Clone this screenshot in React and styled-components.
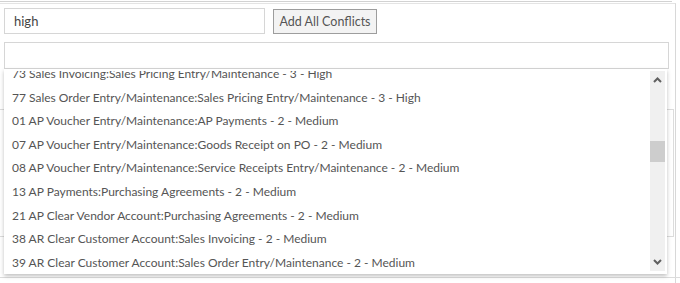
import React from 'react';
import styled, { createGlobalStyle } from 'styled-components';

const GlobalStyle = createGlobalStyle`
  body {
    margin: 0;
    background: #fff;
    font-family: Lato, "Open Sans", Arial, sans-serif;
  }
`;

const TopRule = styled.div`
  margin-top: 1px;
  height: 1px;
  width: 672px;
  background: #d2d2d2;
`;

const Panel = styled.div`
  margin-top: 1px;
  width: 671px;
  height: 279px;
  border-top: 1px solid #e4e4e4;
  border-right: 1px solid #d8d8d8;
  padding: 4px 0 0 4px;
  box-sizing: content-box;
`;

const SearchRow = styled.div`
  display: flex;
  align-items: flex-start;
  gap: 8px;
`;

const TextInput = styled.input`
  box-sizing: border-box;
  width: ${p => p.$width}px;
  height: ${p => p.$height}px;
  border: 1px solid #d6d6d6;
  padding: 0 9px;
  font-family: inherit;
  font-size: 13px;
  color: #444;
  outline: none;
  background: #fff;
`;

const Button = styled.button`
  box-sizing: border-box;
  margin-top: 1px;
  width: 104px;
  height: 25px;
  border: 1px solid #9d9d9d;
  background: #f3f3f3;
  color: #555;
  font-family: inherit;
  font-size: 12.5px;
  padding: 0;
`;

const Combo = styled.div`
  position: relative;
  margin-top: 8px;
  width: 665px;
`;

const Dropdown = styled.div`
  position: absolute;
  top: 27px;
  left: 0;
  width: 663px;
  height: 205px;
  box-sizing: border-box;
  background: #fff;
  box-shadow: 0 2px 4px rgba(0, 0, 0, 0.25);
  display: flex;
  padding: 2px 2px 3px 0;
  z-index: 2;
`;

const List = styled.ul`
  flex: 1;
  margin: 0;
  padding: 0;
  list-style: none;
  overflow: hidden;
`;

const Item = styled.li`
  height: 23.6px;
  line-height: 23.6px;
  padding-left: 8px;
  font-size: 12px;
  color: #555;
  white-space: nowrap;
  &:first-child {
    margin-top: ${p => p.$offset || 0}px;
  }
`;

const Scrollbar = styled.div`
  width: 15px;
  background: #f0f0f0;
  display: flex;
  flex-direction: column;
  align-items: center;
`;

const Arrow = styled.div`
  height: 18px;
  width: 15px;
  display: flex;
  align-items: center;
  justify-content: center;
`;

const Track = styled.div`
  flex: 1;
  width: 100%;
  padding-top: 52px;
`;

const Thumb = styled.div`
  width: 100%;
  height: 21px;
  background: #cdcdcd;
`;

const Backdrop = styled.div`
  margin: 40px 0 0 -4px;
  width: 673px;
  height: 126px;
  border-top: 1px solid #dcdcdc;
  border-right: 1px solid #dcdcdc;
  border-bottom: 1px solid #dcdcdc;
`;

const FooterRule = styled.div`
  margin: 40px 0 0 -4px;
  width: 680px;
  height: 1px;
  background: #dcdcdc;
`;

const items = [
  '73 Sales Invoicing:Sales Pricing Entry/Maintenance - 3 - High',
  '77 Sales Order Entry/Maintenance:Sales Pricing Entry/Maintenance - 3 - High',
  '01 AP Voucher Entry/Maintenance:AP Payments - 2 - Medium',
  '07 AP Voucher Entry/Maintenance:Goods Receipt on PO - 2 - Medium',
  '08 AP Voucher Entry/Maintenance:Service Receipts Entry/Maintenance - 2 - Medium',
  '13 AP Payments:Purchasing Agreements - 2 - Medium',
  '21 AP Clear Vendor Account:Purchasing Agreements - 2 - Medium',
  '38 AR Clear Customer Account:Sales Invoicing - 2 - Medium',
  '39 AR Clear Customer Account:Sales Order Entry/Maintenance - 2 - Medium',
];

function Chevron({ down }) {
  return (
    <svg width="9" height="6" viewBox="0 0 9 6">
      <polyline
        points={down ? '1,1 4.5,4.5 8,1' : '1,5 4.5,1.5 8,5'}
        fill="none"
        stroke="#606060"
        strokeWidth="2"
      />
    </svg>
  );
}

export default function App() {
  return (
    <>
      <GlobalStyle />
      <TopRule />
      <Panel>
        <SearchRow>
          <TextInput $width={261} $height={26} defaultValue="high" />
          <Button>Add All Conflicts</Button>
        </SearchRow>
        <Combo>
          <TextInput $width={665} $height={27} />
          <Dropdown>
            <List>
              {items.map((text, i) => (
                <Item key={i} $offset={i === 0 ? -9 : 0}>{text}</Item>
              ))}
            </List>
            <Scrollbar>
              <Arrow><Chevron /></Arrow>
              <Track><Thumb /></Track>
              <Arrow><Chevron down /></Arrow>
            </Scrollbar>
          </Dropdown>
        </Combo>
        <Backdrop />
        <FooterRule />
      </Panel>
    </>
  );
}
